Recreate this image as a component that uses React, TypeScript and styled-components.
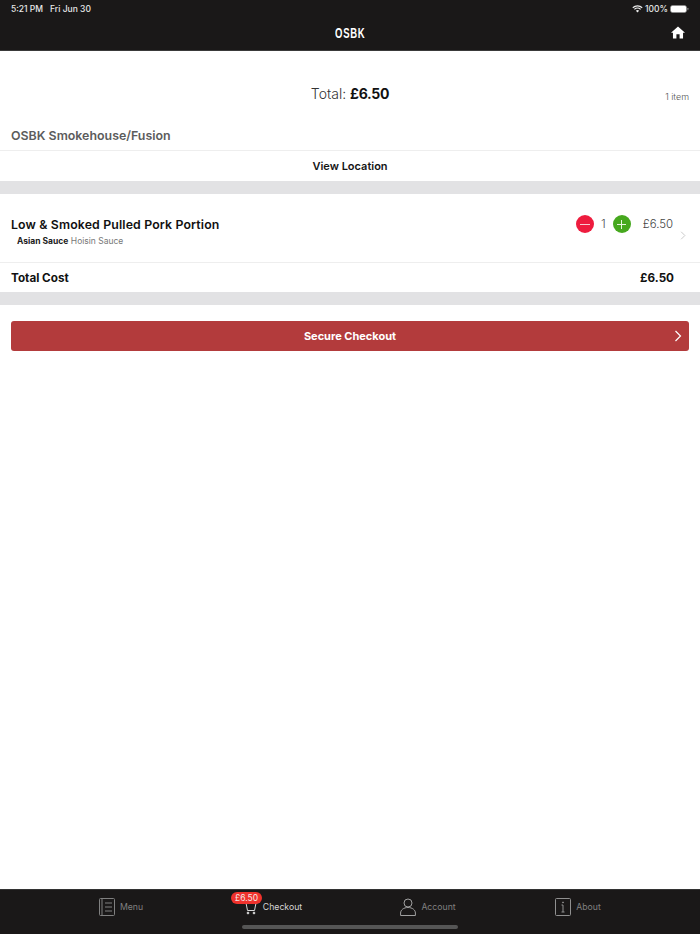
import React from "react";
import styled, { createGlobalStyle } from "styled-components";

const Global = createGlobalStyle`
  html, body { margin: 0; padding: 0; background: #fff; }
  body { font-family: Inter, "Open Sans", sans-serif; }
  #root { height: 934px; }
`;
const Page = styled.div`
  width: 700px; height: 934px; display: flex; flex-direction: column; background: #fff; overflow: hidden;
`;
const Header = styled.header`
  height: 51px; background: #1a1818; color: #fff; box-sizing: border-box; border-bottom: 1px solid #3a3a3a;
  display: flex; flex-direction: column; flex: none;
`;
const StatusBar = styled.div`
  height: 17px; padding: 0 11px 0 11px; display: flex; align-items: center; justify-content: space-between;
  font: 500 8.5px "Inter", sans-serif; color: #e8e8e8;
`;
const StatusLeft = styled.div`display: flex; gap: 7px;`;
const StatusRight = styled.div`display: flex; align-items: center; gap: 2px;`;
const NavBar = styled.div`
  flex: 1; display: flex; align-items: center; justify-content: center; position: relative; padding-bottom: 1px;
`;
const Logo = styled.div`
  font: 700 14px "Liberation Sans", sans-serif; letter-spacing: 1px; color: #fff; transform: scaleX(.68);
`;
const HomeButton = styled.div`position: absolute; right: 15px; top: 9px; display: flex;`;
const TotalSection = styled.section`
  height: 70px; flex: none; display: flex; align-items: flex-end; justify-content: center; position: relative;
`;
const TotalText = styled.div`
  font: 300 14px Inter, sans-serif; color: #333; line-height: 18px; padding-bottom: 18px;
  b { font-weight: 700; color: #111; letter-spacing: -.3px; }
`;
const ItemCount = styled.div`
  position: absolute; right: 11px; top: 40px; font: 300 9px Inter, sans-serif; color: #555;
`;
const Restaurant = styled.div`
  height: 30px; flex: none; box-sizing: border-box; padding: 8px 11px 0; border-bottom: 1px solid #eeeeee;
  font: 600 12.4px/14px Inter, sans-serif; color: #5c5c5c;
`;
const ViewLocation = styled.div`
  height: 30px; flex: none; display: flex; align-items: center; justify-content: center;
  font: 600 11px Inter, sans-serif; color: #151515;
`;
const Divider = styled.div`height: 13px; flex: none; background: #e2e2e4;`;
const ItemRow = styled.div`
  height: 69px; flex: none; box-sizing: border-box; border-bottom: 1px solid #eeeeee; padding: 22px 11px 0;
  display: flex; justify-content: space-between; position: relative;
`;
const ItemInfo = styled.div`display: flex; flex-direction: column;`;
const ItemName = styled.div`font: 600 12.3px/17px Inter, sans-serif; color: #111; letter-spacing: .15px;`;
const Modifier = styled.div`
  font: 400 8.5px/12px Inter, sans-serif; color: #777; padding: 2px 0 0 6px;
  b { font-weight: 700; color: #222; }
`;
const Controls = styled.div`display: flex; align-items: flex-start; margin: -1px 16px 0 0;`;
const Round = styled.div<{ $color: string }>`
  width: 18px; height: 18px; border-radius: 50%; background: ${p => p.$color}; display: flex; align-items: center; justify-content: center;
`;
const Qty = styled.div`width: 19px; text-align: center; font: 300 12px/18px Inter, sans-serif; color: #555;`;
const Price = styled.div`margin-left: 12px; font: 300 11.4px/18px Inter, sans-serif; color: #444;`;
const RowChevron = styled.div`position: absolute; right: 14px; top: 37px; display: flex;`;
const CostRow = styled.div`
  height: 29px; flex: none; display: flex; align-items: center; justify-content: space-between; padding: 0 26px 0 11px;
  font: 700 11.7px Inter, sans-serif; color: #111;
`;
const CheckoutWrap = styled.div`padding: 16px 11px 0; flex: 1;`;
const CheckoutButton = styled.div`
  height: 30px; background: #b33b3c; border-radius: 3px; display: flex; align-items: center; justify-content: center; position: relative;
  font: 700 11px Inter, sans-serif; color: #fff;
`;
const ButtonChevron = styled.div`position: absolute; right: 7px; top: 9px; display: flex;`;
const TabBar = styled.nav`
  height: 45px; flex: none; box-sizing: border-box; background: #1a1818; border-top: 1px solid #333; padding: 0 0 10px 45px;
  display: grid; grid-template-columns: 152px 152px 158px 142px; position: relative;
`;
const Tab = styled.div<{ $active?: boolean }>`
  display: flex; align-items: center; justify-content: center; gap: 5px; position: relative;
  font: 400 8.7px Inter, sans-serif; color: ${p => (p.$active ? "#d6d6d6" : "#808080")};
`;
const Badge = styled.div`
  position: absolute; left: 34px; top: 2px; height: 12px; width: 31px; border-radius: 6px; background: #f0322c; color: #f5e8e8;
  font: 400 8.5px/12px Inter, sans-serif; text-align: center;
`;
const HomeIndicator = styled.div`
  position: absolute; left: 242px; top: 35px; width: 216px; height: 4px; border-radius: 2px; background: #555;
`;

const Chevron = ({ color, w, h, sw }: { color: string; w: number; h: number; sw: number }) => (
  <svg width={w} height={h} viewBox="0 0 8 12" fill="none"><path d="M1.5 1 L6.5 6 L1.5 11" stroke={color} strokeWidth={sw} /></svg>
);

export default function App() {
  return (
    <Page>
      <Global />
      <Header>
        <StatusBar>
          <StatusLeft><span>5:21 PM</span><span>Fri Jun 30</span></StatusLeft>
          <StatusRight>
            <svg width="11" height="8" viewBox="0 0 11 8" fill="none">
              <path d="M.8 2.8a6.8 6.8 0 0 1 9.4 0M2.4 4.4a4.5 4.5 0 0 1 6.2 0" stroke="#eee" strokeWidth="1.2" />
              <path d="M3.9 5.8a2.2 2.2 0 0 1 3.2 0L5.5 7.6z" fill="#eee" />
            </svg>
            <span>100%</span>
            <svg width="19" height="8" viewBox="0 0 19 8">
              <rect x=".5" y=".5" width="16" height="7" rx="2" fill="#fff" stroke="#888" strokeWidth=".6" />
              <rect x="17.4" y="2.7" width="1" height="2.6" rx=".5" fill="#888" />
            </svg>
          </StatusRight>
        </StatusBar>
        <NavBar>
          <Logo>OSBK</Logo>
          <HomeButton>
            <svg width="14" height="13" viewBox="0 0 15 13">
              <path d="M7.5 0 L15 6.8 L12.9 6.8 L12.9 13 L9.2 13 L9.2 8.4 L5.8 8.4 L5.8 13 L2.1 13 L2.1 6.8 L0 6.8 Z" fill="#fff" />
            </svg>
          </HomeButton>
        </NavBar>
      </Header>
      <TotalSection>
        <TotalText>Total: <b>£6.50</b></TotalText>
        <ItemCount>1 item</ItemCount>
      </TotalSection>
      <Restaurant>OSBK Smokehouse/Fusion</Restaurant>
      <ViewLocation>View Location</ViewLocation>
      <Divider />
      <ItemRow>
        <ItemInfo>
          <ItemName>Low &amp; Smoked Pulled Pork Portion</ItemName>
          <Modifier><b>Asian Sauce</b> Hoisin Sauce</Modifier>
        </ItemInfo>
        <Controls>
          <Round $color="#ee1c3e">
            <svg width="10" height="1" viewBox="0 0 10 1"><rect width="10" height="1" fill="#f8c9d0" /></svg>
          </Round>
          <Qty>1</Qty>
          <Round $color="#46a81e">
            <svg width="9" height="9" viewBox="0 0 9 9"><path d="M0 4.5h9M4.5 0v9" stroke="#e6f5de" strokeWidth="1" /></svg>
          </Round>
          <Price>£6.50</Price>
        </Controls>
        <RowChevron><Chevron color="#c4c4c4" w={6} h={9} sw={1.2} /></RowChevron>
      </ItemRow>
      <CostRow><span>Total Cost</span><span>£6.50</span></CostRow>
      <Divider />
      <CheckoutWrap>
        <CheckoutButton>
          Secure Checkout
          <ButtonChevron><Chevron color="#fff" w={8} h={12} sw={1.2} /></ButtonChevron>
        </CheckoutButton>
      </CheckoutWrap>
      <TabBar>
        <Tab>
          <svg width="16" height="18" viewBox="0 0 16 18" fill="none" stroke="#808080" strokeWidth="1">
            <rect x=".5" y=".5" width="15" height="17" rx="1" />
            <path d="M3 1v16M6 5h7M6 9h7M6 13h7" />
          </svg>
          Menu
        </Tab>
        <Tab $active>
          <Badge>£6.50</Badge>
          <svg width="14" height="13" viewBox="0 0 14 13" fill="none" stroke="#d6d6d6" strokeWidth="1" style={{ marginTop: 3 }}>
            <path d="M0 1h13.5M2 1l1.5 7.5h7l1.5-7.5" />
            <circle cx="4" cy="11" r=".9" fill="#d6d6d6" />
            <circle cx="10" cy="11" r=".9" fill="#d6d6d6" />
          </svg>
          Checkout
        </Tab>
        <Tab>
          <svg width="16" height="18" viewBox="0 0 16 18" fill="none" stroke="#a0a0a0" strokeWidth="1">
            <circle cx="8" cy="5" r="4" />
            <path d="M.6 17.5v-2.5c0-3 3-5.5 7.4-5.5s7.4 2.5 7.4 5.5v2.5z" />
          </svg>
          Account
        </Tab>
        <Tab>
          <svg width="16" height="18" viewBox="0 0 16 18" fill="none" stroke="#909090" strokeWidth="1">
            <rect x=".5" y=".5" width="15" height="17" rx="1" />
            <path d="M8 7v7M6.5 7H8M6.5 14h3" />
            <circle cx="8" cy="4.4" r=".5" fill="#909090" />
          </svg>
          About
        </Tab>
        <HomeIndicator />
      </TabBar>
    </Page>
  );
}
